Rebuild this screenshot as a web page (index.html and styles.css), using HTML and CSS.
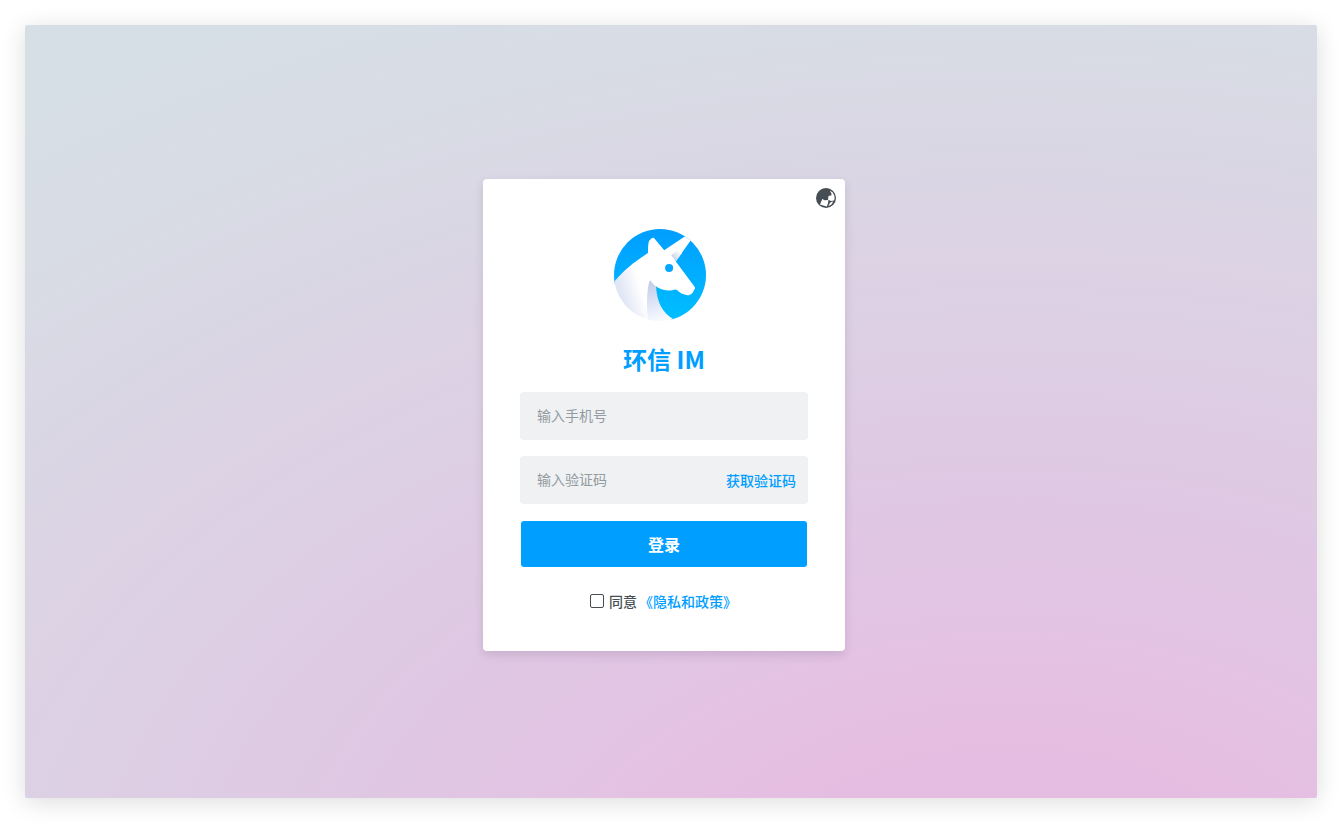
FILE: index.html
```html
<!DOCTYPE html>
<html lang="zh-CN">
<head>
<meta charset="utf-8">
<title>环信 IM</title>
<link rel="stylesheet" href="styles.css">
</head>
<body>
<main class="stage">
  <form class="card">
    <div class="card-top">
      <svg class="globe" viewBox="0 0 20 20" aria-hidden="true">
        <circle cx="10" cy="10" r="10" fill="#464e53"/>
        <path fill="#fff" d="M13.8 2.7 16.5 4.2 18.2 7.2 18.7 10.3 18 12.6 15.2 13 12 11.8 12.5 8 15.6 7.3 15.3 5.2ZM6.3 10.9 8.6 12.2 12.4 12 12 15.2 10.8 18.5 7.2 17.4 4 16.6ZM15 13.9 17.3 13.4 15.6 16.2 13.2 17.8 12.4 17.8 13.6 15.6Z"/>
      </svg>
    </div>
    <svg class="logo" viewBox="0 0 92 92" aria-hidden="true">
      <defs>
        <clipPath id="disc"><circle cx="46" cy="46" r="46"/></clipPath>
        <linearGradient id="sky" x1="0" y1="0" x2="0" y2="1"><stop offset="0" stop-color="#009dff"/><stop offset="1" stop-color="#00bfff"/></linearGradient>
        <linearGradient id="neck" gradientUnits="userSpaceOnUse" x1="7" y1="64" x2="27" y2="58"><stop offset="0" stop-color="#e0e6f4"/><stop offset="1" stop-color="#fff"/></linearGradient>
        <linearGradient id="throat" gradientUnits="userSpaceOnUse" x1="38" y1="54" x2="48" y2="91"><stop offset="0" stop-color="#c3cee9"/><stop offset="1" stop-color="#f8faff"/></linearGradient>
        <linearGradient id="horn" gradientUnits="userSpaceOnUse" x1="57" y1="29" x2="66" y2="22"><stop offset="0" stop-color="#c3ceea"/><stop offset="1" stop-color="#fff"/></linearGradient>
      </defs>
      <g clip-path="url(#disc)">
        <path fill="url(#sky)" d="M0 0H92V92H59C42 82 36 70 34 40L0 56Z"/>
        <path fill="url(#throat)" d="M34 48 42 57C43 73 48 83 59 90L58 95H32Z"/>
        <path fill="url(#neck)" d="M0 53C10 41 20 33 34 24L37 49C33 56 31 75 35 95H0Z"/>
        <path fill="#fff" d="M49 22 73 6 77 11 62 32Z"/>
        <path fill="url(#horn)" d="M56 27 67 19 68 24 62 32Z"/>
        <path fill="#fff" d="M31 27 34 24C34 19 34 15 35 12Q38 8 40 9L50 21 57 26 80 57Q82 59 80 61C78 67 73 67 69 65C64 63 63 59 59 61C51 63 41 59 36 51L33 54Z"/>
        <circle cx="55.1" cy="39" r="4" fill="#00a6ff"/>
      </g>
    </svg>
    <h1 class="title">环信 IM</h1>
    <div class="field"><input class="input" type="text" placeholder="输入手机号"></div>
    <div class="field">
      <input class="input" type="text" placeholder="输入验证码">
      <a class="code">获取验证码</a>
    </div>
    <button class="login" type="button">登录</button>
    <div class="agree"><span class="box"></span><span class="agree-text">同意</span><a class="policy">《隐私和政策》</a></div>
  </form>
</main>
</body>
</html>
```
FILE: styles.css
```css
* { box-sizing: border-box; }
body {
  margin: 0;
  height: 823px;
  padding: 25px;
  background: #fff;
  overflow: hidden;
  font-family: "Noto Sans CJK SC", sans-serif;
}
.stage {
  height: 773px;
  padding: 154px 0 0 458px;
  border-radius: 2px;
  background: radial-gradient(ellipse 1620px 1000px at 985px 890px, #e6bae1 0%, #e5bde2 16%, #e4c1e3 25%, #dfc8e3 42%, #ddcfe4 58%, #dad6e4 75%, #d8dce5 89%, #d6dee6 100%);
  box-shadow: 0 4px 24px rgba(0, 0, 0, .14);
}
.card {
  display: flex;
  flex-direction: column;
  align-items: center;
  width: 362px;
  height: 472px;
  border-radius: 4px;
  background: #fff;
  box-shadow: 0 4px 10px rgba(70, 50, 90, .15);
}
.card-top {
  display: flex;
  justify-content: flex-end;
  width: 100%;
  height: 50px;
  padding: 9px 9px 0 0;
}
.globe { width: 20px; height: 20px; }
.logo { width: 92px; height: 92px; margin-right: 8px; flex: none; }
.title {
  margin: 20px 0 0;
  height: 36px;
  font-size: 24px;
  line-height: 36px;
  font-weight: 700;
  color: #009eff;
}
.field {
  display: flex;
  align-items: center;
  width: 288px;
  height: 48px;
  margin-top: 15px;
  padding: 0 12px 2px 17px;
  border-radius: 4px;
  background: #f0f1f3;
}
.field + .field { margin-top: 16px; }
.input {
  flex: 1;
  min-width: 0;
  padding: 0;
  border: 0;
  outline: 0;
  background: transparent;
  font: 14px/20px "Noto Sans CJK SC", sans-serif;
}
.input::placeholder { color: #919ba1; opacity: 1; }
.code { padding-top: 2px; font-size: 14px; line-height: 20px; font-weight: 500; color: #009eff; }
.login {
  width: 286px;
  height: 46px;
  margin-top: 17px;
  padding: 0;
  border: 0;
  border-radius: 3px;
  background: #009eff;
  color: #fff;
  font: 700 16px/24px "Noto Sans CJK SC", sans-serif;
}
.agree {
  display: flex;
  align-items: center;
  width: 288px;
  height: 20px;
  margin-top: 24px;
  padding-left: 70px;
  font-size: 14px;
  line-height: 20px;
}
.box { width: 14px; height: 14px; border: 1px solid #464e53; border-radius: 2px; }
.agree-text { margin-left: 5px; color: #464e53; font-weight: 500; }
.policy { margin-left: 2px; color: #009eff; font-weight: 500; }
```
